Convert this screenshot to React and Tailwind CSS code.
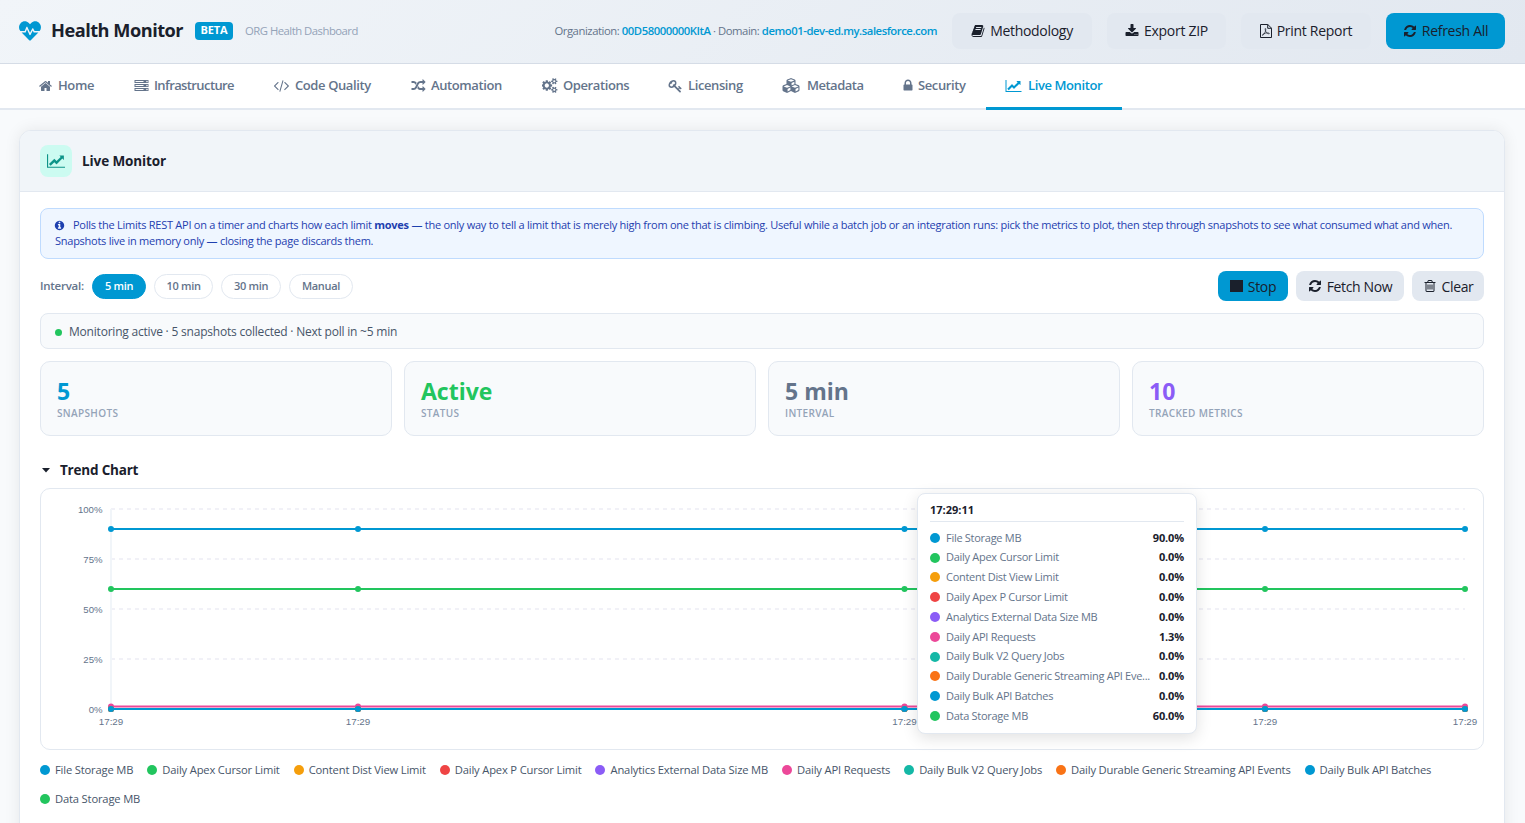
import { useState } from 'react';
import { FaHeartbeat, FaCubes } from 'react-icons/fa';

// Glyph outlines: [viewBox width, viewBox height, path].
const GLYPHS = {
  home: [1792, 1792, 'M1472 992v480q0 26-19 45t-45 19h-384v-384h-256v384h-384q-26 0-45-19t-19-45v-480q0-1 .5-3t.5-3l575-474 575 474q1 2 1 6zm223-69l-62 74q-8 9-21 11h-3q-13 0-21-7l-692-577-692 577q-12 8-24 7-13-2-21-11l-62-74q-8-10-7-23.5t11-21.5l719-599q32-26 76-26t76 26l244 204v-195q0-14 9-23t23-9h192q14 0 23 9t9 23v408l219 182q10 8 11 21.5t-7 23.5z'],
  server: [1792, 1792, 'M128 1408h1024v-128h-1024v128zm0-512h1024v-128h-1024v128zm1568 448q0-40-28-68t-68-28-68 28-28 68 28 68 68 28 68-28 28-68zm-1568-960h1024v-128h-1024v128zm1568 448q0-40-28-68t-68-28-68 28-28 68 28 68 68 28 68-28 28-68zm0-512q0-40-28-68t-68-28-68 28-28 68 28 68 68 28 68-28 28-68zm96 832v384h-1792v-384h1792zm0-512v384h-1792v-384h1792zm0-512v384h-1792v-384h1792z'],
  code: [1811, 1792, 'M553 1399l-50 50q-10 10-23 10t-23-10l-466-466q-10-10-10-23t10-23l466-466q10-10 23-10t23 10l50 50q10 10 10 23t-10 23l-393 393 393 393q10 10 10 23t-10 23zm591-1067l-373 1291q-4 13-15.5 19.5t-23.5 2.5l-62-17q-13-4-19.5-15.5t-2.5-24.5l373-1291q4-13 15.5-19.5t23.5-2.5l62 17q13 4 19.5 15.5t2.5 24.5zm657 651l-466 466q-10 10-23 10t-23-10l-50-50q-10-10-10-23t10-23l393-393-393-393q-10-10-10-23t10-23l50-50q10-10 23-10t23 10l466 466q10 10 10 23t-10 23z'],
  random: [1792, 1792, 'M666 481q-60 92-137 273-22-45-37-72.5t-40.5-63.5-51-56.5-63-35-81.5-14.5h-224q-14 0-23-9t-9-23v-192q0-14 9-23t23-9h224q250 0 410 225zm1126 799q0 14-9 23l-320 320q-9 9-23 9-13 0-22.5-9.5t-9.5-22.5v-192q-32 0-85 .5t-81 1-73-1-71-5-64-10.5-63-18.5-58-28.5-59-40-55-53.5-56-69.5q59-93 136-273 22 45 37 72.5t40.5 63.5 51 56.5 63 35 81.5 14.5h256v-192q0-14 9-23t23-9q12 0 24 10l319 319q9 9 9 23zm0-896q0 14-9 23l-320 320q-9 9-23 9-13 0-22.5-9.5t-9.5-22.5v-192h-256q-48 0-87 15t-69 45-51 61.5-45 77.5q-32 62-78 171-29 66-49.5 111t-54 105-64 100-74 83-90 68.5-106.5 42-128 16.5h-224q-14 0-23-9t-9-23v-192q0-14 9-23t23-9h224q48 0 87-15t69-45 51-61.5 45-77.5q32-62 78-171 29-66 49.5-111t54-105 64-100 74-83 90-68.5 106.5-42 128-16.5h256v-192q0-14 9-23t23-9q12 0 24 10l319 319q9 9 9 23z'],
  cogs: [1920, 1792, 'M832 896q0-106-75-181t-181-75-181 75-75 181 75 181 181 75 181-75 75-181zm768 512q0-52-38-90t-90-38-90 38-38 90q0 53 37.5 90.5t90.5 37.5 90.5-37.5 37.5-90.5zm0-1024q0-52-38-90t-90-38-90 38-38 90q0 53 37.5 90.5t90.5 37.5 90.5-37.5 37.5-90.5zm-384 421v185q0 10-7 19.5t-16 10.5l-155 24q-11 35-32 76 34 48 90 115 7 11 7 20 0 12-7 19-23 30-82.5 89.5t-78.5 59.5q-11 0-21-7l-115-90q-37 19-77 31-11 108-23 155-7 24-30 24h-186q-11 0-20-7.5t-10-17.5l-23-153q-34-10-75-31l-118 89q-7 7-20 7-11 0-21-8-144-133-144-160 0-9 7-19 10-14 41-53t47-61q-23-44-35-82l-152-24q-10-1-17-9.5t-7-19.5v-185q0-10 7-19.5t16-10.5l155-24q11-35 32-76-34-48-90-115-7-11-7-20 0-12 7-20 22-30 82-89t79-59q11 0 21 7l115 90q34-18 77-32 11-108 23-154 7-24 30-24h186q11 0 20 7.5t10 17.5l23 153q34 10 75 31l118-89q8-7 20-7 11 0 21 8 144 133 144 160 0 9-7 19-12 16-42 54t-45 60q23 48 34 82l152 23q10 2 17 10.5t7 19.5zm640 533v140q0 16-149 31-12 27-30 52 51 113 51 138 0 4-4 7-122 71-124 71-8 0-46-47t-52-68q-20 2-30 2t-30-2q-14 21-52 68t-46 47q-2 0-124-71-4-3-4-7 0-25 51-138-18-25-30-52-149-15-149-31v-140q0-16 149-31 13-29 30-52-51-113-51-138 0-4 4-7 4-2 35-20t59-34 30-16q8 0 46 46.5t52 67.5q20-2 30-2t30 2q51-71 92-112l6-2q4 0 124 70 4 3 4 7 0 25-51 138 17 23 30 52 149 15 149 31zm0-1024v140q0 16-149 31-12 27-30 52 51 113 51 138 0 4-4 7-122 71-124 71-8 0-46-47t-52-68q-20 2-30 2t-30-2q-14 21-52 68t-46 47q-2 0-124-71-4-3-4-7 0-25 51-138-18-25-30-52-149-15-149-31v-140q0-16 149-31 13-29 30-52-51-113-51-138 0-4 4-7 4-2 35-20t59-34 30-16q8 0 46 46.5t52 67.5q20-2 30-2t30 2q51-71 92-112l6-2q4 0 124 70 4 3 4 7 0 25-51 138 17 23 30 52 149 15 149 31z'],
  key: [1792, 1792, 'M832 512q0-80-56-136t-136-56-136 56-56 136q0 42 19 83-41-19-83-19-80 0-136 56t-56 136 56 136 136 56 136-56 56-136q0-42-19-83 41 19 83 19 80 0 136-56t56-136zm851 704q0 17-49 66t-66 49q-9 0-28.5-16t-36.5-33-38.5-40-24.5-26l-96 96 220 220q28 28 28 68 0 42-39 81t-81 39q-40 0-68-28l-671-671q-176 131-365 131-163 0-265.5-102.5t-102.5-265.5q0-160 95-313t248-248 313-95q163 0 265.5 102.5t102.5 265.5q0 189-131 365l355 355 96-96q-3-3-26-24.5t-40-38.5-33-36.5-16-28.5q0-17 49-66t66-49q13 0 23 10 6 6 46 44.5t82 79.5 86.5 86 73 78 28.5 41z'],
  lock: [1792, 1792, 'M640 768h512v-192q0-106-75-181t-181-75-181 75-75 181v192zm832 96v576q0 40-28 68t-68 28h-960q-40 0-68-28t-28-68v-576q0-40 28-68t68-28h32v-192q0-184 132-316t316-132 316 132 132 316v192h32q40 0 68 28t28 68z'],
  chart: [2048, 1792, 'M2048 1536v128h-2048v-1536h128v1408h1920zm-128-1248v435q0 21-19.5 29.5t-35.5-7.5l-121-121-633 633q-10 10-23 10t-23-10l-233-233-416 416-192-192 585-585q10-10 23-10t23 10l233 233 464-464-121-121q-16-16-7.5-35.5t29.5-19.5h435q14 0 23 9t9 23z'],
  book: [1792, 1792, 'M1703 478q40 57 18 129l-275 906q-19 64-76.5 107.5t-122.5 43.5h-923q-77 0-148.5-53.5t-99.5-131.5q-24-67-2-127 0-4 3-27t4-37q1-8-3-21.5t-3-19.5q2-11 8-21t16.5-23.5 16.5-23.5q23-38 45-91.5t30-91.5q3-10 .5-30t-.5-28q3-11 17-28t17-23q21-36 42-92t25-90q1-9-2.5-32t.5-28q4-13 22-30.5t22-22.5q19-26 42.5-84.5t27.5-96.5q1-8-3-25.5t-2-26.5q2-8 9-18t18-23 17-21q8-12 16.5-30.5t15-35 16-36 19.5-32 26.5-23.5 36-11.5 47.5 5.5l-1 3q38-9 51-9h761q74 0 114 56t18 130l-274 906q-36 119-71.5 153.5t-128.5 34.5h-869q-27 0-38 15-11 16-1 43 24 70 144 70h923q29 0 56-15.5t35-41.5l300-987q7-22 5-57 38 15 59 43zm-1064 2q-4 13 2 22.5t20 9.5h608q13 0 25.5-9.5t16.5-22.5l21-64q4-13-2-22.5t-20-9.5h-608q-13 0-25.5 9.5t-16.5 22.5zm-83 256q-4 13 2 22.5t20 9.5h608q13 0 25.5-9.5t16.5-22.5l21-64q4-13-2-22.5t-20-9.5h-608q-13 0-25.5 9.5t-16.5 22.5z'],
  download: [1792, 1792, 'M1344 1344q0-26-19-45t-45-19-45 19-19 45 19 45 45 19 45-19 19-45zm256 0q0-26-19-45t-45-19-45 19-19 45 19 45 45 19 45-19 19-45zm128-224v320q0 40-28 68t-68 28h-1472q-40 0-68-28t-28-68v-320q0-40 28-68t68-28h465l135 136q58 56 136 56t136-56l136-136h464q40 0 68 28t28 68zm-325-569q17 41-14 70l-448 448q-18 19-45 19t-45-19l-448-448q-31-29-14-70 17-39 59-39h256v-448q0-26 19-45t45-19h256q26 0 45 19t19 45v448h256q42 0 59 39z'],
  refresh: [1792, 1792, 'M1639 1056q0 5-1 7-64 268-268 434.5t-478 166.5q-146 0-282.5-55t-243.5-157l-129 129q-19 19-45 19t-45-19-19-45v-448q0-26 19-45t45-19h448q26 0 45 19t19 45-19 45l-137 137q71 66 161 102t187 36q134 0 250-65t186-179q11-17 53-117 8-23 30-23h192q13 0 22.5 9.5t9.5 22.5zm25-800v448q0 26-19 45t-45 19h-448q-26 0-45-19t-19-45 19-45l138-138q-148-137-349-137-134 0-250 65t-186 179q-11 17-53 117-8 23-30 23h-199q-13 0-22.5-9.5t-9.5-22.5v-7q65-268 270-434.5t480-166.5q146 0 284 55.5t245 156.5l130-129q19-19 45-19t45 19 19 45z'],
  trash: [1792, 1792, 'M704 736v576q0 14-9 23t-23 9h-64q-14 0-23-9t-9-23v-576q0-14 9-23t23-9h64q14 0 23 9t9 23zm256 0v576q0 14-9 23t-23 9h-64q-14 0-23-9t-9-23v-576q0-14 9-23t23-9h64q14 0 23 9t9 23zm256 0v576q0 14-9 23t-23 9h-64q-14 0-23-9t-9-23v-576q0-14 9-23t23-9h64q14 0 23 9t9 23zm128 724v-948h-896v948q0 22 7 40.5t14.5 27 10.5 8.5h832q3 0 10.5-8.5t14.5-27 7-40.5zm-672-1076h448l-48-117q-7-9-17-11h-317q-10 2-17 11zm928 32v64q0 14-9 23t-23 9h-96v948q0 83-47 143.5t-113 60.5h-832q-66 0-113-58.5t-47-141.5v-952h-96q-14 0-23-9t-9-23v-64q0-14 9-23t23-9h309l70-167q15-37 54-63t79-26h320q40 0 79 26t54 63l70 167h309q14 0 23 9t9 23z'],
  info: [1792, 1792, 'M1152 1376v-160q0-14-9-23t-23-9h-96v-512q0-14-9-23t-23-9h-320q-14 0-23 9t-9 23v160q0 14 9 23t23 9h96v320h-96q-14 0-23 9t-9 23v160q0 14 9 23t23 9h448q14 0 23-9t9-23zm-128-896v-160q0-14-9-23t-23-9h-192q-14 0-23 9t-9 23v160q0 14 9 23t23 9h192q14 0 23-9t9-23zm640 416q0 209-103 385.5t-279.5 279.5-385.5 103-385.5-103-279.5-279.5-103-385.5 103-385.5 279.5-279.5 385.5-103 385.5 103 279.5 279.5 103 385.5z'],
};

function Glyph({ name, className }) {
  const [w, h, d] = GLYPHS[name];
  return (
    <svg viewBox={`0 0 ${w} ${h}`} className={className} fill="currentColor">
      <path d={d} />
    </svg>
  );
}

// Thin page outline with a folded corner and the PDF squiggle.
function PdfIcon() {
  return (
    <svg viewBox="0 0 12 14" className="h-3.5 w-3" fill="none" stroke="currentColor">
      <path d="M.5.5h7.3l3.7 3.7v9.3H.5zM7.7.5v3.8h3.8" />
      <path d="M5.4 4.4c.5 0 .5 1.6 0 3C4.700 9.200 3.300 11.400 2.500 11.400c-.8-.6 1.200-1.900 3.200-2.300 1.700-.3 3.700-.2 3.700.4 0 .7-1.800.2-2.900-.9C5.300 7.500 4.900 4.400 5.400 4.400z" strokeWidth=".7" />
    </svg>
  );
}

// Navigation tabs, in display order.
const TABS = [
  { label: 'Home', width: 'w-[94px]', icon: <Glyph name="home" className="-ml-0.5 h-3.5 w-[15px]" /> },
  { label: 'Infrastructure', width: 'w-[140px]', spacing: 'tracking-[-0.6px]', icon: <Glyph name="server" className="h-3.5 w-[15px]" /> },
  { label: 'Code Quality', width: 'w-[137px]', icon: <Glyph name="code" className="mr-px h-[15px] w-[15px]" /> },
  { label: 'Automation', width: 'w-[131px]', icon: <Glyph name="random" className="h-3.5 w-[15px]" /> },
  { label: 'Operations', width: 'w-[126px]', icon: <Glyph name="cogs" className="h-[15px] w-4" /> },
  { label: 'Licensing', width: 'w-[115px]', icon: <Glyph name="key" className="h-3.5 w-[15px]" /> },
  { label: 'Metadata', width: 'w-[120px]', spacing: 'tracking-[-0.5px]', icon: <FaCubes className="-ml-px mr-0.5 h-[17px] w-[18px]" /> },
  { label: 'Security', width: 'w-[103px]', icon: <Glyph name="lock" className="-mx-0.5 h-[15px] w-3.5" /> },
  { label: 'Live Monitor', width: 'w-[136px]', icon: <Glyph name="chart" className="-ml-px mr-px h-3.5 w-[17px]" /> },
];

const INTERVALS = [
  { label: '5 min', width: 'w-[54px]' },
  { label: '10 min', width: 'w-[59px]' },
  { label: '30 min', width: 'w-[60px]' },
  { label: 'Manual', width: 'w-[64px]' },
];

const STATS = [
  { value: '5', label: 'Snapshots', color: 'text-[#0098d2]' },
  { value: 'Active', label: 'Status', color: 'text-[#22c55e]' },
  { value: '5 min', label: 'Interval', color: 'text-[#64748b]' },
  { value: '10', label: 'Tracked Metrics', color: 'text-[#8b5cf6]' },
];

// Tracked metrics with the line colour and the current percentage.
const METRICS = [
  { name: 'File Storage MB', color: '#0098d2', value: 90 },
  { name: 'Daily Apex Cursor Limit', color: '#22c55e', value: 0 },
  { name: 'Content Dist View Limit', color: '#f59e0b', value: 0 },
  { name: 'Daily Apex P Cursor Limit', color: '#ef4444', value: 0 },
  { name: 'Analytics External Data Size MB', color: '#8b5cf6', value: 0 },
  { name: 'Daily API Requests', color: '#ec4899', value: 1.3 },
  { name: 'Daily Bulk V2 Query Jobs', color: '#14b8a6', value: 0 },
  { name: 'Daily Durable Generic Streaming API Events', color: '#f97316', value: 0 },
  { name: 'Daily Bulk API Batches', color: '#0098d2', value: 0 },
  { name: 'Data Storage MB', color: '#22c55e', value: 60 },
];

// Horizontal positions of the snapshots inside the chart.
const POINTS = [70, 317, 863.5, 1224, 1424];

// Long metric names are cut to fit the tooltip.
const shorten = (name) => (name.length > 40 ? `${name.slice(0, 39)}...` : name);

function Dot({ color }) {
  return <span className="h-2.5 w-2.5 shrink-0 rounded-full" style={{ backgroundColor: color }} />;
}

function Header() {
  const button = 'flex h-9 items-center justify-center gap-[5px] rounded-lg text-[14px] tracking-[-0.3px] whitespace-nowrap';
  return (
    <header className="flex h-16 items-center border-b border-[#d5dce6] bg-linear-135 from-[#f1f5f9] to-[#e2e8f0] px-5 pb-0.5">
      <FaHeartbeat className="-ml-0.5 h-[22px] w-6 text-[#0098d2]" />
      <h1 className="ml-[9px] w-[131px] text-[18.2px] font-bold tracking-[-0.5px] whitespace-nowrap">Health Monitor</h1>
      <span className="ml-[13px] flex h-[18px] w-[38px] items-center justify-center rounded bg-[#0098d2] text-[11px] font-bold tracking-[-0.1px] text-white">BETA</span>
      <span className="ml-3 pt-0.5 text-[11.3px] tracking-[-0.5px] text-[#94a3b8]">ORG Health Dashboard</span>
      <div className="ml-auto flex items-center gap-[15px]">
        <p className="pt-0.5 text-[11.3px] tracking-[-0.45px] text-[#64748b]">
          Organization: <span className="font-semibold text-[#0098d2]">00D58000000KItA</span> · Domain:{' '}
          <span className="font-semibold text-[#0098d2]">demo01-dev-ed.my.salesforce.com</span>
        </p>
        <button className={`${button} w-[140px] bg-[#e2e8f0]`}>
          <Glyph name="book" className="h-3.5 w-3.5" /> Methodology
        </button>
        <button className={`${button} w-[119px] bg-[#e2e8f0]`}>
          <Glyph name="download" className="h-3.5 w-3.5" /> Export ZIP
        </button>
        <button className={`${button} w-[130px] bg-[#e2e8f0]`}>
          <PdfIcon /> Print Report
        </button>
        <button className={`${button} w-[119px] bg-[#0098d2]`}>
          <Glyph name="refresh" className="h-3.5 w-3.5" /> Refresh All
        </button>
      </div>
    </header>
  );
}

function Nav({ tab, setTab }) {
  return (
    <nav className="flex h-[46px] border-b-2 border-[#e2e8f0] bg-white px-5">
      {TABS.map(({ label, width, spacing, icon }) => (
        <button
          key={label}
          onClick={() => setTab(label)}
          className={`${width} ${spacing || 'tracking-[-0.4px]'} flex h-[46px] shrink-0 items-center gap-[5px] border-b-3 pl-5 whitespace-nowrap text-[13px] font-semibold ${
            tab === label ? 'border-[#0098d2] text-[#0098d2]' : 'border-transparent text-[#64748b]'
          }`}
        >
          {icon}
          {label}
        </button>
      ))}
    </nav>
  );
}

function Chart() {
  const y = (value) => 220 - value * 2;
  return (
    <svg width="1442" height="260" className="block">
      {[100, 75, 50, 25, 0].map((tick) => (
        <g key={tick}>
          <line x1="70" x2="1424" y1={y(tick)} y2={y(tick)} stroke="#f1f1f7" strokeWidth="2" strokeDasharray="4 4" />
          <text x="61.5" y={y(tick) + 4} textAnchor="end" className="fill-[#64748b] font-['Liberation_Sans',sans-serif] text-[9.6px]">
            {tick}%
          </text>
        </g>
      ))}
      <line x1="70" x2="70" y1="20" y2="220" stroke="#f1f5f9" strokeWidth="2" />
      {METRICS.map((m) => (
        <g key={m.name}>
          <line x1="70" x2="1424" y1={y(m.value)} y2={y(m.value)} stroke={m.color} strokeWidth="2" />
          {POINTS.map((x) => (
            <circle key={x} cx={x} cy={y(m.value)} r="3" fill={m.color} />
          ))}
        </g>
      ))}
      {POINTS.map((x) => (
        <text key={x} x={x} y="236" textAnchor="middle" className="fill-[#64748b] font-['Liberation_Sans',sans-serif] text-[9.8px]">
          17:29
        </text>
      ))}
    </svg>
  );
}

// Values of every metric at the hovered snapshot.
function Tooltip() {
  return (
    <div className="absolute top-1 left-[876px] h-[241px] w-[280px] rounded-lg border border-[#e2e8f0] bg-white px-3 pt-2 shadow-[0_4px_16px_rgba(0,0,0,0.12)]">
      <div className="mb-1.5 h-5 border-b border-[#e2e8f0] text-[11px] leading-4 font-bold">17:29:11</div>
      {METRICS.map((m) => (
        <div key={m.name} className="flex h-[19.8px] items-center gap-1.5 text-[11px] tracking-[-0.28px] whitespace-nowrap">
          <Dot color={m.color} />
          <span className="text-[#64748b]">{shorten(m.name)}</span>
          <span className="ml-auto font-bold tracking-[-0.15px]">{m.value.toFixed(1)}%</span>
        </div>
      ))}
    </div>
  );
}

function App() {
  const [tab, setTab] = useState('Live Monitor');
  const [interval, setInterval] = useState('5 min');
  const action = 'flex h-[30px] items-center justify-center gap-[5px] rounded-lg text-[14px] tracking-[-0.35px] whitespace-nowrap';

  return (
    <div className="h-[823px] overflow-hidden bg-[#f8fafc] font-['Open_Sans','Noto_Sans',sans-serif] text-[#1a202c]">
      <Header />
      <Nav tab={tab} setTab={setTab} />

      <main className="mt-5 mr-5 ml-[19px] h-[760px] overflow-clip rounded-xl border border-[#e2e8f0] bg-white shadow-[0_0_16px_rgba(0,0,0,0.08)]">
        <div className="flex h-[61px] items-center gap-2.5 border-b border-[#e2e8f0] bg-[#f1f5f9] px-5">
          <span className="flex h-8 w-8 items-center justify-center rounded-lg bg-[#ccfbf1] text-[#0d9488]">
            <Glyph name="chart" className="h-4 w-[18px]" />
          </span>
          <h2 className="text-[13.5px] font-bold tracking-[-0.1px]">Live Monitor</h2>
        </div>

        <div className="px-5 pt-4">
          <p className="h-[51px] rounded-lg border border-[#bfdbfe] bg-[#eff6ff] px-3.5 pt-2 text-[11px] leading-4 tracking-[-0.255px] text-[#1e40af]">
            <Glyph name="info" className="mr-2 -ml-px -mt-0.5 inline h-[11px] w-[11px]" />
            Polls the Limits REST API on a timer and charts how each limit <b>moves</b> — the only way to tell a limit that is merely high from one that is climbing. Useful while a batch job or an integration runs: pick the metrics to plot, then step through snapshots to see what consumed what and when. Snapshots live in memory only — closing the page discards them.
          </p>

          {/* Polling controls */}
          <div className="mt-3 flex h-[30px] items-center gap-2">
            <span className="w-11 text-[11.5px] font-semibold tracking-[-0.25px] text-[#64748b]">Interval:</span>
            {INTERVALS.map(({ label, width }) => (
              <button
                key={label}
                onClick={() => setInterval(label)}
                className={`${width} h-[25px] rounded-full border text-[11px] font-semibold tracking-[-0.3px] ${
                  interval === label ? 'border-[#0098d2] bg-[#0098d2] text-white' : 'border-[#e2e8f0] bg-white text-[#64748b]'
                }`}
              >
                {label}
              </button>
            ))}
            <div className="ml-auto flex gap-2">
              <button className={`${action} w-[70px] bg-[#0098d2]`}>
                <span className="h-3 w-[13px] bg-current" /> Stop
              </button>
              <button className={`${action} w-[108px] bg-[#e2e8f0]`}>
                <Glyph name="refresh" className="h-3.5 w-3.5" /> Fetch Now
              </button>
              <button className={`${action} w-[72px] bg-[#e2e8f0]`}>
                <Glyph name="trash" className="h-3.5 w-3.5" /> Clear
              </button>
            </div>
          </div>

          <div className="mt-3 flex h-9 items-center gap-[7px] rounded-lg border border-[#e2e8f0] bg-[#f8fafc] px-3.5 pt-0.5 text-[12px] tracking-[-0.21px] text-[#475569]">
            <span className="mt-px h-[7px] w-[7px] rounded-full bg-[#22c55e]" />
            Monitoring active · 5 snapshots collected · Next poll in ~5 min
          </div>

          <div className="mt-3 grid grid-cols-4 gap-3">
            {STATS.map(({ value, label, color }) => (
              <div key={label} className="h-[75px] rounded-[10px] border border-[#e2e8f0] bg-[#f8fafc] px-4 pt-[15px]">
                <div className={`text-[23px] leading-7 font-bold ${color}`}>{value}</div>
                <div className="pt-px text-[10px] leading-[15px] font-semibold tracking-[0.35px] text-[#94a3b8] uppercase">{label}</div>
              </div>
            ))}
          </div>

          <h3 className="mt-6 flex h-5 items-center text-[13.5px] font-bold tracking-[-0.2px]">
            <svg viewBox="0 0 8 5" className="mr-2.5 ml-0.5 h-[5px] w-2" fill="currentColor">
              <path d="M0 0h8L4 4.5z" />
            </svg>
            Trend Chart
          </h3>

          <div className="relative mt-2 h-[262px] rounded-[10px] border border-[#e2e8f0] bg-white">
            <Chart />
            <Tooltip />
          </div>

          {/* Legend */}
          <div className="mt-2.5 flex flex-wrap gap-x-3.5 gap-y-[9px]">
            {METRICS.map((m) => (
              <span key={m.name} className="flex h-5 items-center gap-[5px] text-[11.2px] tracking-[-0.17px] text-[#475569]">
                <Dot color={m.color} />
                {m.name}
              </span>
            ))}
          </div>
        </div>
      </main>
    </div>
  );
}

export default App;
